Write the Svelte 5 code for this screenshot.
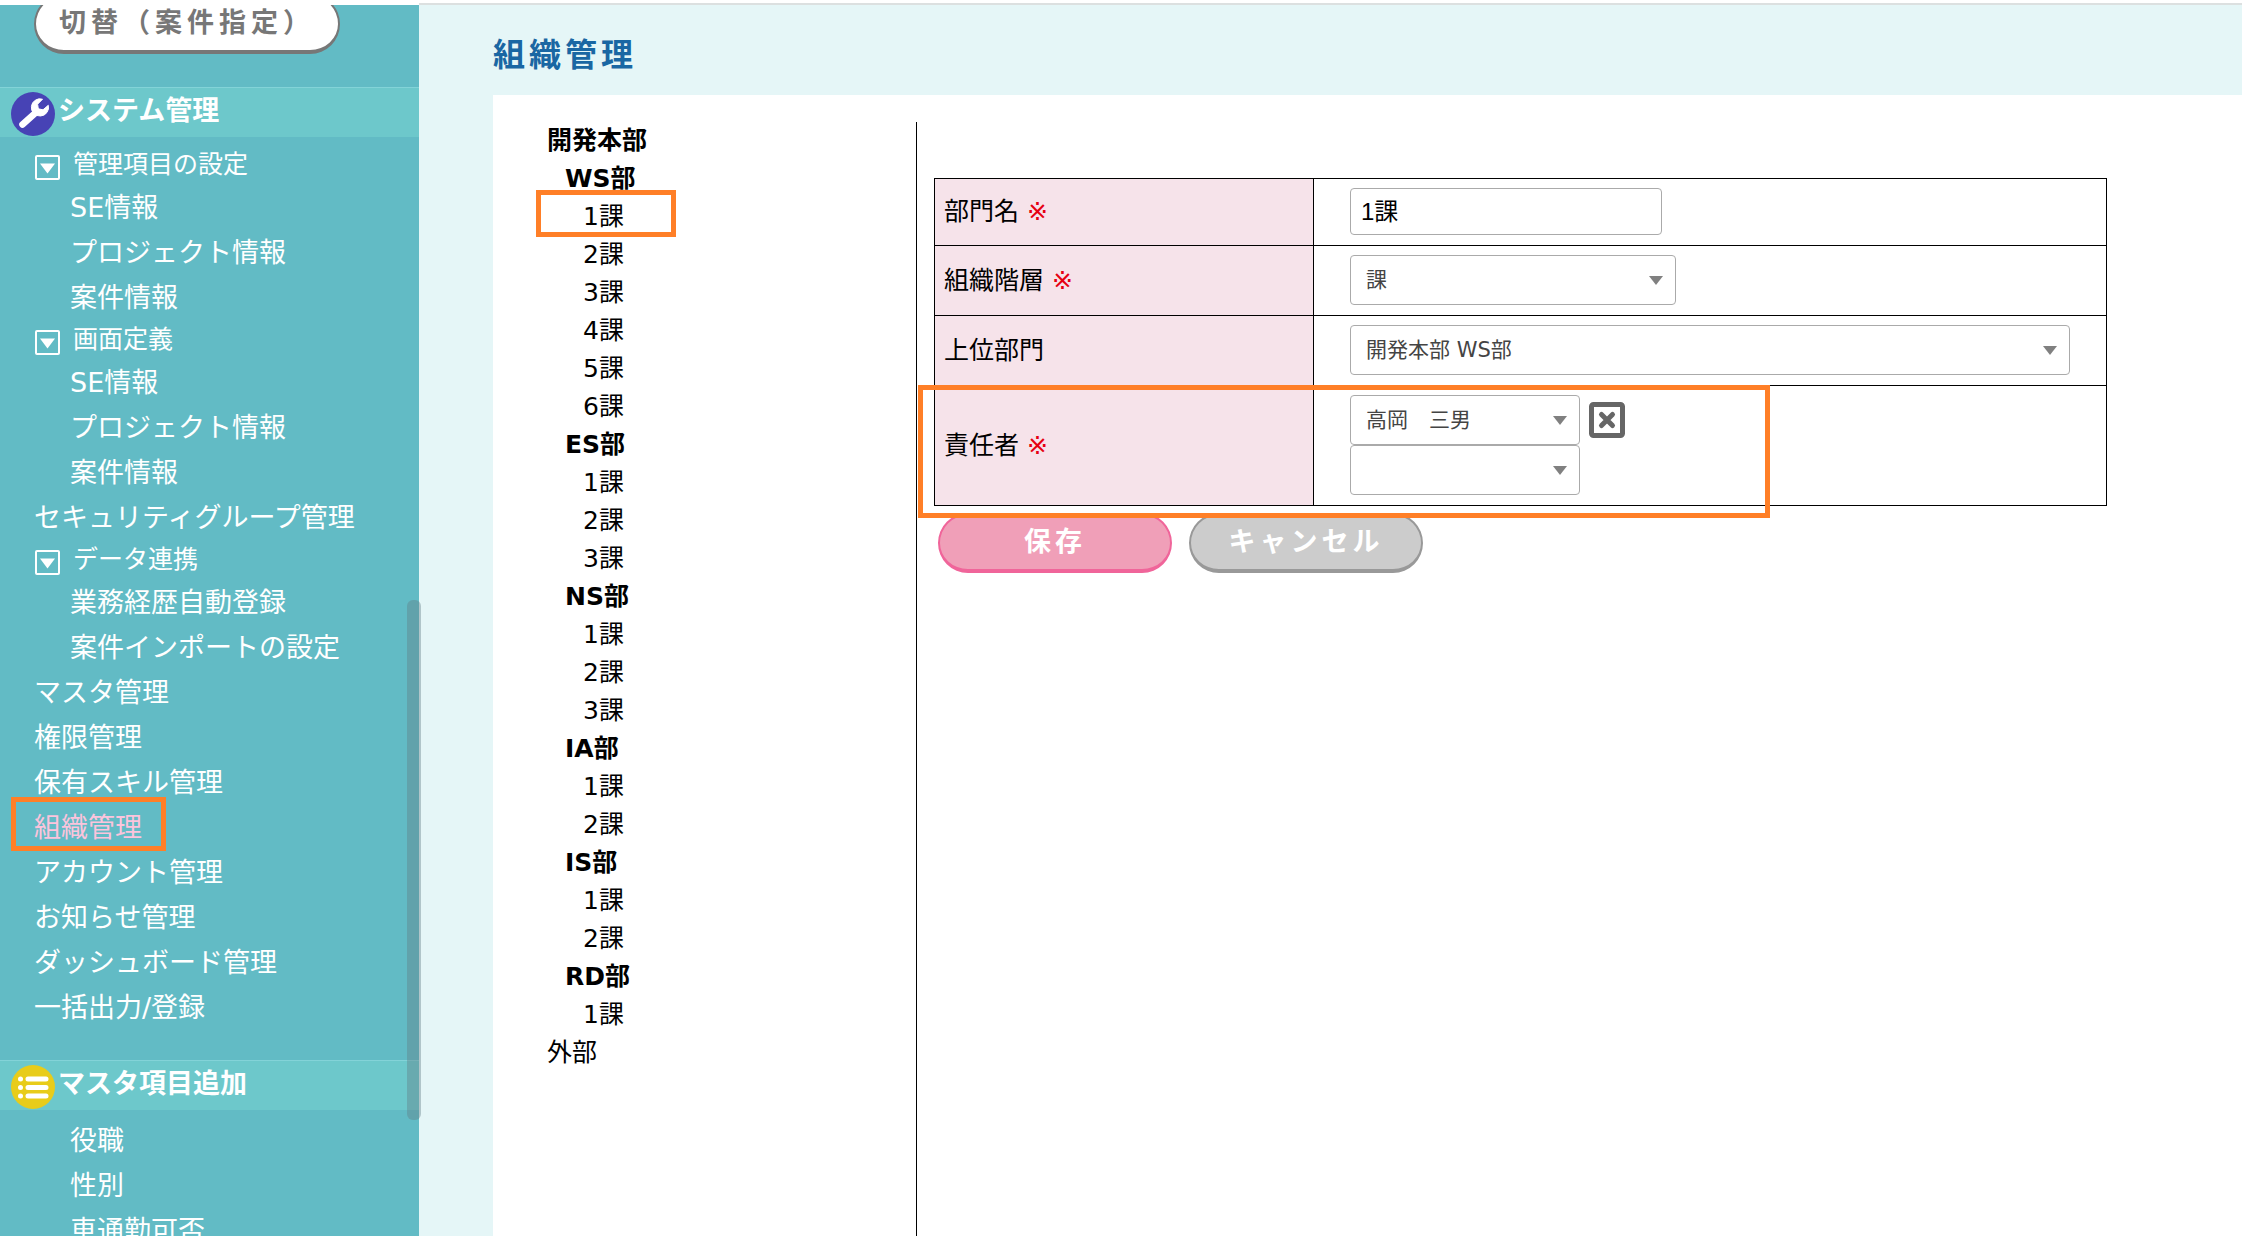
<script lang="ts">
  interface MenuItem {
    label: string;
    kind: 'parent' | 'child' | 'leaf';
    active?: boolean;
  }

  interface OrgNode {
    label: string;
    level: number;
    selected?: boolean;
  }

  const systemMenu: MenuItem[] = [
    { label: '管理項目の設定', kind: 'parent' },
    { label: 'SE情報', kind: 'child' },
    { label: 'プロジェクト情報', kind: 'child' },
    { label: '案件情報', kind: 'child' },
    { label: '画面定義', kind: 'parent' },
    { label: 'SE情報', kind: 'child' },
    { label: 'プロジェクト情報', kind: 'child' },
    { label: '案件情報', kind: 'child' },
    { label: 'セキュリティグループ管理', kind: 'leaf' },
    { label: 'データ連携', kind: 'parent' },
    { label: '業務経歴自動登録', kind: 'child' },
    { label: '案件インポートの設定', kind: 'child' },
    { label: 'マスタ管理', kind: 'leaf' },
    { label: '権限管理', kind: 'leaf' },
    { label: '保有スキル管理', kind: 'leaf' },
    { label: '組織管理', kind: 'leaf', active: true },
    { label: 'アカウント管理', kind: 'leaf' },
    { label: 'お知らせ管理', kind: 'leaf' },
    { label: 'ダッシュボード管理', kind: 'leaf' },
    { label: '一括出力/登録', kind: 'leaf' }
  ];

  const masterMenu: MenuItem[] = [
    { label: '役職', kind: 'child' },
    { label: '性別', kind: 'child' },
    { label: '車通勤可否', kind: 'child' }
  ];

  // Number of sections (課) under each department
  const departments = [
    { name: 'WS部', sections: 6 },
    { name: 'ES部', sections: 3 },
    { name: 'NS部', sections: 3 },
    { name: 'IA部', sections: 2 },
    { name: 'IS部', sections: 2 },
    { name: 'RD部', sections: 1 }
  ];

  const tree: OrgNode[] = [
    { label: '開発本部', level: 0 },
    ...departments.flatMap((d) => [
      { label: d.name, level: 1 },
      ...Array.from({ length: d.sections }, (_, i) => ({
        label: `${i + 1}課`,
        level: 2,
        selected: d.name === 'WS部' && i === 0
      }))
    ])
  ];

  let name = $state('1課');
  let layer = $state('課');
  let parent = $state('開発本部 WS部');
  let manager = $state('高岡　三男');
  let nextManager = $state('');
</script>

{#snippet menu(items: MenuItem[])}
  <ul class="menu">
    {#each items as item}
      <li class={item.kind}>
        {#if item.kind === 'parent'}
          <svg class="toggle" viewBox="0 0 25 25" aria-hidden="true">
            <rect x="1" y="1" width="23" height="23" rx="1" fill="none" stroke="#fff" stroke-width="2" />
            <path d="M5 8.500H20L12.500 18.500Z" fill="#fff" />
          </svg>
        {/if}
        <a href="#menu" class:active={item.active}>{item.label}</a>
      </li>
    {/each}
  </ul>
{/snippet}

<div class="page">
  <aside class="sidebar">
    <button type="button" class="pill switch">切替（案件指定）</button>

    <h2 class="band">
      <svg viewBox="0 0 44 44" aria-hidden="true">
        <circle cx="22" cy="22" r="22" fill="#4743b5" />
        <path d="M11.500 32.500L26 19.500" stroke="#fff" stroke-width="6.500" stroke-linecap="round" />
        <path
          d="M31.500 7.200A8.600 8.600 0 1 0 37.300 13.300L32 17.800L27.300 16.800L26.600 12.200Z"
          fill="#fff"
          stroke="#fff"
          stroke-width="1"
          stroke-linejoin="round"
        />
      </svg>
      システム管理
    </h2>
    {@render menu(systemMenu)}

    <h2 class="band">
      <svg viewBox="0 0 44 44" aria-hidden="true">
        <circle cx="22" cy="22" r="22" fill="#e8cc1a" />
        <g stroke="#fff" stroke-width="5" stroke-linecap="round">
          <path d="M17 14H35M17 22.500H35M17 31H35" />
          <path d="M9.500 14h.01M9.500 22.500h.01M9.500 31h.01" />
        </g>
      </svg>
      マスタ項目追加
    </h2>
    {@render menu(masterMenu)}

    <div class="thumb"></div>
  </aside>

  <main>
    <h1>組織管理</h1>
    <div class="card">
      <ul class="tree">
        {#each tree as node}
          <li class="level{node.level}" class:selected={node.selected}>
            <a href="#org">{node.label}</a>
          </li>
        {/each}
        <li><a href="#org">外部</a></li>
      </ul>

      <form class="detail" onsubmit={(e) => e.preventDefault()}>
        <div class="table-wrap">
          <table>
            <tbody>
              <tr>
                <th><label for="name">部門名 <em>※</em></label></th>
                <td><input id="name" type="text" bind:value={name} /></td>
              </tr>
              <tr>
                <th><label for="layer">組織階層 <em>※</em></label></th>
                <td>
                  <span class="select layer">
                    <select id="layer" bind:value={layer}>
                      <option>課</option>
                    </select>
                  </span>
                </td>
              </tr>
              <tr>
                <th><label for="parent">上位部門</label></th>
                <td>
                  <span class="select wide">
                    <select id="parent" bind:value={parent}>
                      <option>開発本部 WS部</option>
                    </select>
                  </span>
                </td>
              </tr>
              <tr>
                <th><label for="manager">責任者 <em>※</em></label></th>
                <td>
                  <div class="manager">
                    <span class="select person">
                      <select id="manager" bind:value={manager}>
                        <option>高岡　三男</option>
                        <option value=""></option>
                      </select>
                    </span>
                    <button type="button" class="remove" aria-label="削除" onclick={() => (manager = '')}>
                      <svg viewBox="0 0 36 36" aria-hidden="true">
                        <rect x="2.500" y="2.500" width="31" height="31" rx="2" fill="#fff" stroke="#666" stroke-width="5" />
                        <path d="M12.500 12.500L23.500 23.500M23.500 12.500L12.500 23.500" stroke="#666" stroke-width="5" stroke-linecap="round" />
                      </svg>
                    </button>
                  </div>
                  <span class="select person">
                    <select aria-label="責任者 2" bind:value={nextManager}>
                      <option value=""></option>
                    </select>
                  </span>
                </td>
              </tr>
            </tbody>
          </table>
          <div class="frame"></div>
        </div>
        <div class="actions">
          <button type="submit" class="pill save">保存</button>
          <button type="button" class="pill cancel">キャンセル</button>
        </div>
      </form>
    </div>
  </main>
</div>

<style>
  :global(body) {
    font-family: 'DejaVu Sans', 'Noto Sans CJK JP', sans-serif;
    font-size: 25px;
    color: #000;
    background: #fff;
  }

  .page {
    box-sizing: border-box;
    display: flex;
    height: 100vh;
    padding-top: 3px;
    overflow: hidden;
  }

  a {
    color: inherit;
    text-decoration: none;
  }

  ul {
    margin: 0;
    padding: 0;
    list-style: none;
  }

  .sidebar,
  main {
    border-top: 2px solid #dce0e0;
  }

  /* clip-path keeps the top cut while the thumb may cross the right edge */
  .sidebar {
    position: relative;
    flex: none;
    width: 419px;
    background: #62bbc5;
    color: #fff;
    clip-path: inset(2px -4px 0 0);
  }

  .pill {
    box-sizing: border-box;
    height: 60px;
    padding: 0 0 6px;
    border: 2px solid;
    border-bottom-width: 4px;
    border-radius: 30px;
    font: bold 27px 'Noto Sans CJK JP', sans-serif;
    letter-spacing: 4px;
    cursor: pointer;
  }

  .switch {
    display: block;
    width: 306px;
    margin: -11px 0 33px 34px;
    background: #fff;
    border-color: #777;
    color: #777;
    letter-spacing: 5px;
  }

  .band {
    box-sizing: border-box;
    display: flex;
    align-items: center;
    gap: 3px;
    height: 50px;
    margin: 0;
    padding: 0 0 4px 11px;
    border-top: 1px solid #83d3d8;
    background: #6dc8cb;
    font-size: 27px;
    line-height: 44px;
  }

  .band svg {
    flex: none;
    width: 44px;
    height: 44px;
    margin-top: 6px;
  }

  .menu {
    padding: 8px 0 30px;
  }

  .menu li {
    display: flex;
    align-items: center;
    padding-left: 34px;
    font-size: 27px;
    line-height: 45px;
  }

  .menu .child {
    padding-left: 70px;
  }

  .menu .parent {
    gap: 13px;
    padding-left: 35px;
    font-size: 25px;
    line-height: 40px;
  }

  .toggle {
    width: 25px;
    height: 25px;
    margin-top: 4px;
  }

  .active {
    position: relative;
    color: #fcc4dc;
  }

  .active::after,
  .selected::after,
  .frame {
    content: '';
    position: absolute;
    box-sizing: border-box;
    border: 5px solid #ff7f27;
    pointer-events: none;
  }

  .active::after {
    inset: -8px -24px -1px -23px;
  }

  .thumb {
    position: absolute;
    top: 595px;
    right: -2px;
    width: 14px;
    height: 520px;
    border-radius: 6px;
    background: rgba(98, 124, 132, 0.4);
  }

  main {
    flex: 1;
    display: flex;
    flex-direction: column;
    min-width: 0;
    padding-left: 74px;
    background: #e5f6f7;
  }

  h1 {
    margin: 0;
    padding-top: 10px;
    color: #1a67a3;
    font-size: 32px;
    line-height: 80px;
    letter-spacing: 4px;
  }

  .card {
    flex: 1;
    display: flex;
    padding-top: 27px;
    background: #fff;
  }

  .tree {
    flex: none;
    box-sizing: border-box;
    width: 423px;
    padding-left: 54px;
    line-height: 38px;
  }

  .level0,
  .level1 {
    font-weight: bold;
  }

  .level1 {
    padding-left: 18px;
  }

  .level2 {
    padding-left: 36px;
  }

  .selected {
    position: relative;
  }

  .selected::after {
    top: -8px;
    left: -11px;
    width: 140px;
    height: 47px;
  }

  .detail {
    flex: 1;
    min-width: 0;
    padding: 56px 135px 0 17px;
    border-left: 1px solid #000;
  }

  .table-wrap {
    position: relative;
  }

  .frame {
    bottom: -12px;
    left: -16px;
    width: 852px;
    height: 133px;
    z-index: 1;
  }

  table {
    width: 100%;
    border-collapse: collapse;
    table-layout: fixed;
  }

  th,
  td {
    border: 1px solid #000;
  }

  th {
    width: 369px;
    padding: 0 0 6px 9px;
    background: #f6e3ea;
    font-weight: normal;
    text-align: left;
  }

  em {
    color: #e60012;
    font-style: normal;
  }

  td {
    padding: 9px 36px 10px;
  }

  input,
  select {
    box-sizing: border-box;
    display: block;
    border: 1px solid #aaa;
    border-radius: 4px;
    background: #fff;
  }

  input {
    width: 312px;
    height: 47px;
    padding: 0 10px 4px;
    font: 24px 'Liberation Sans', 'Noto Sans CJK JP', sans-serif;
    color: #000;
  }

  .select {
    position: relative;
    display: block;
  }

  .select::after {
    content: '';
    position: absolute;
    top: 21px;
    right: 13px;
    border: solid transparent;
    border-width: 9px 7px 0;
    border-top-color: #808080;
    pointer-events: none;
  }

  select {
    appearance: none;
    width: 100%;
    height: 50px;
    padding: 0 30px 0 15px;
    font: 21px 'DejaVu Sans', 'Noto Sans CJK JP', sans-serif;
    color: #444;
  }

  .layer {
    width: 326px;
  }

  .person {
    width: 230px;
  }

  .manager {
    display: flex;
    align-items: center;
    gap: 9px;
  }

  .remove {
    width: 36px;
    height: 36px;
    padding: 0;
    border: 0;
    background: none;
    cursor: pointer;
  }

  .remove svg {
    display: block;
  }

  .actions {
    display: flex;
    gap: 17px;
    padding: 7px 0 0 4px;
  }

  .actions .pill {
    width: 234px;
    color: #fff;
  }

  .save {
    background: #f09fb8;
    border-color: #f0659a;
  }

  .cancel {
    background: #ccc;
    border-color: #999;
  }
</style>
